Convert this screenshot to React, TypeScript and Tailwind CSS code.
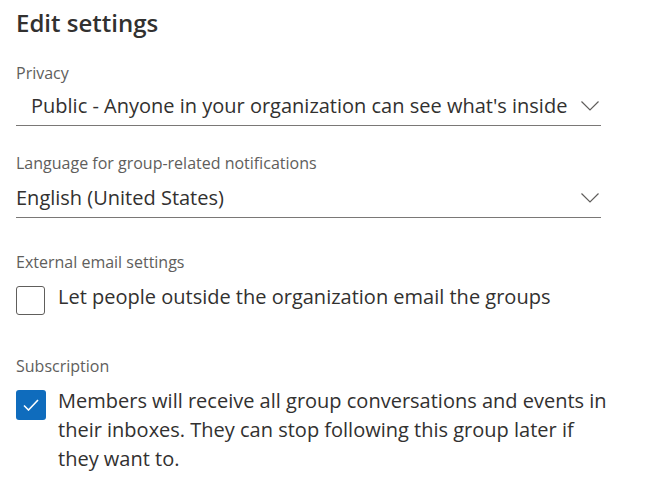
import React from 'react';

function Chevron() {
  return (
    <svg width="18" height="10" viewBox="0 0 18 10" fill="none" className="shrink-0">
      <path d="M0.5 0.5 L9 9 L17.5 0.5" stroke="#605e5c" strokeWidth="1.2" />
    </svg>
  );
}

function Dropdown({ value, indent, extra }: { value: string; indent?: boolean; extra?: string }) {
  return (
    <div className={`flex items-center h-[39px] border-b border-[#7a7876] pr-[2px] mr-[53px] ${extra ?? ''}`}>
      <span className={`flex-1 whitespace-nowrap text-[20px] text-[#323130] ${indent ? 'pl-[15px]' : ''}`}>{value}</span>
      <Chevron />
    </div>
  );
}

function Label({ children }: { children: React.ReactNode }) {
  return <div className="text-[16px] text-[#605e5c] leading-[28px]">{children}</div>;
}

export default function App() {
  return (
    <div className="w-[670px] h-[500px] bg-white px-4 font-['Open_Sans',sans-serif] overflow-hidden">
      <h2 className="text-[24px] font-semibold text-[#323130] leading-[32px] pt-[7px]">Edit settings</h2>

      <div className="mt-[20px]">
        <Label>Privacy</Label>
        <Dropdown value="Public - Anyone in your organization can see what's inside" indent />
      </div>

      <div className="mt-[23px]">
        <Label>Language for group-related notifications</Label>
        <Dropdown value="English (United States)" extra="mt-[2px]" />
      </div>

      <div className="mt-[30px]">
        <Label>External email settings</Label>
        <div className="flex items-start gap-[13px] mt-[10px]">
          <div className="w-[29px] h-[29px] rounded-[3px] border border-[#605e5c] shrink-0" />
          <span className="text-[20px] text-[#323130] leading-[30px] -mt-[4px]">
            Let people outside the organization email the groups
          </span>
        </div>
      </div>

      <div className="mt-[37px]">
        <Label>Subscription</Label>
        <div className="flex items-start gap-[12px] mt-[10px]">
          <div className="w-[30px] h-[30px] rounded-[3px] bg-[#0f6cbd] shrink-0 flex items-center justify-center">
            <svg width="16" height="12" viewBox="0 0 16 12" fill="none">
              <path d="M1 6.5 L5.5 11 L15 1" stroke="white" strokeWidth="1.6" />
            </svg>
          </div>
          <span className="text-[20px] text-[#323130] leading-[29px] -mt-[4px] w-[560px]">
            Members will receive all group conversations and events in their inboxes. They can stop following this group later if they want to.
          </span>
        </div>
      </div>
    </div>
  );
}
